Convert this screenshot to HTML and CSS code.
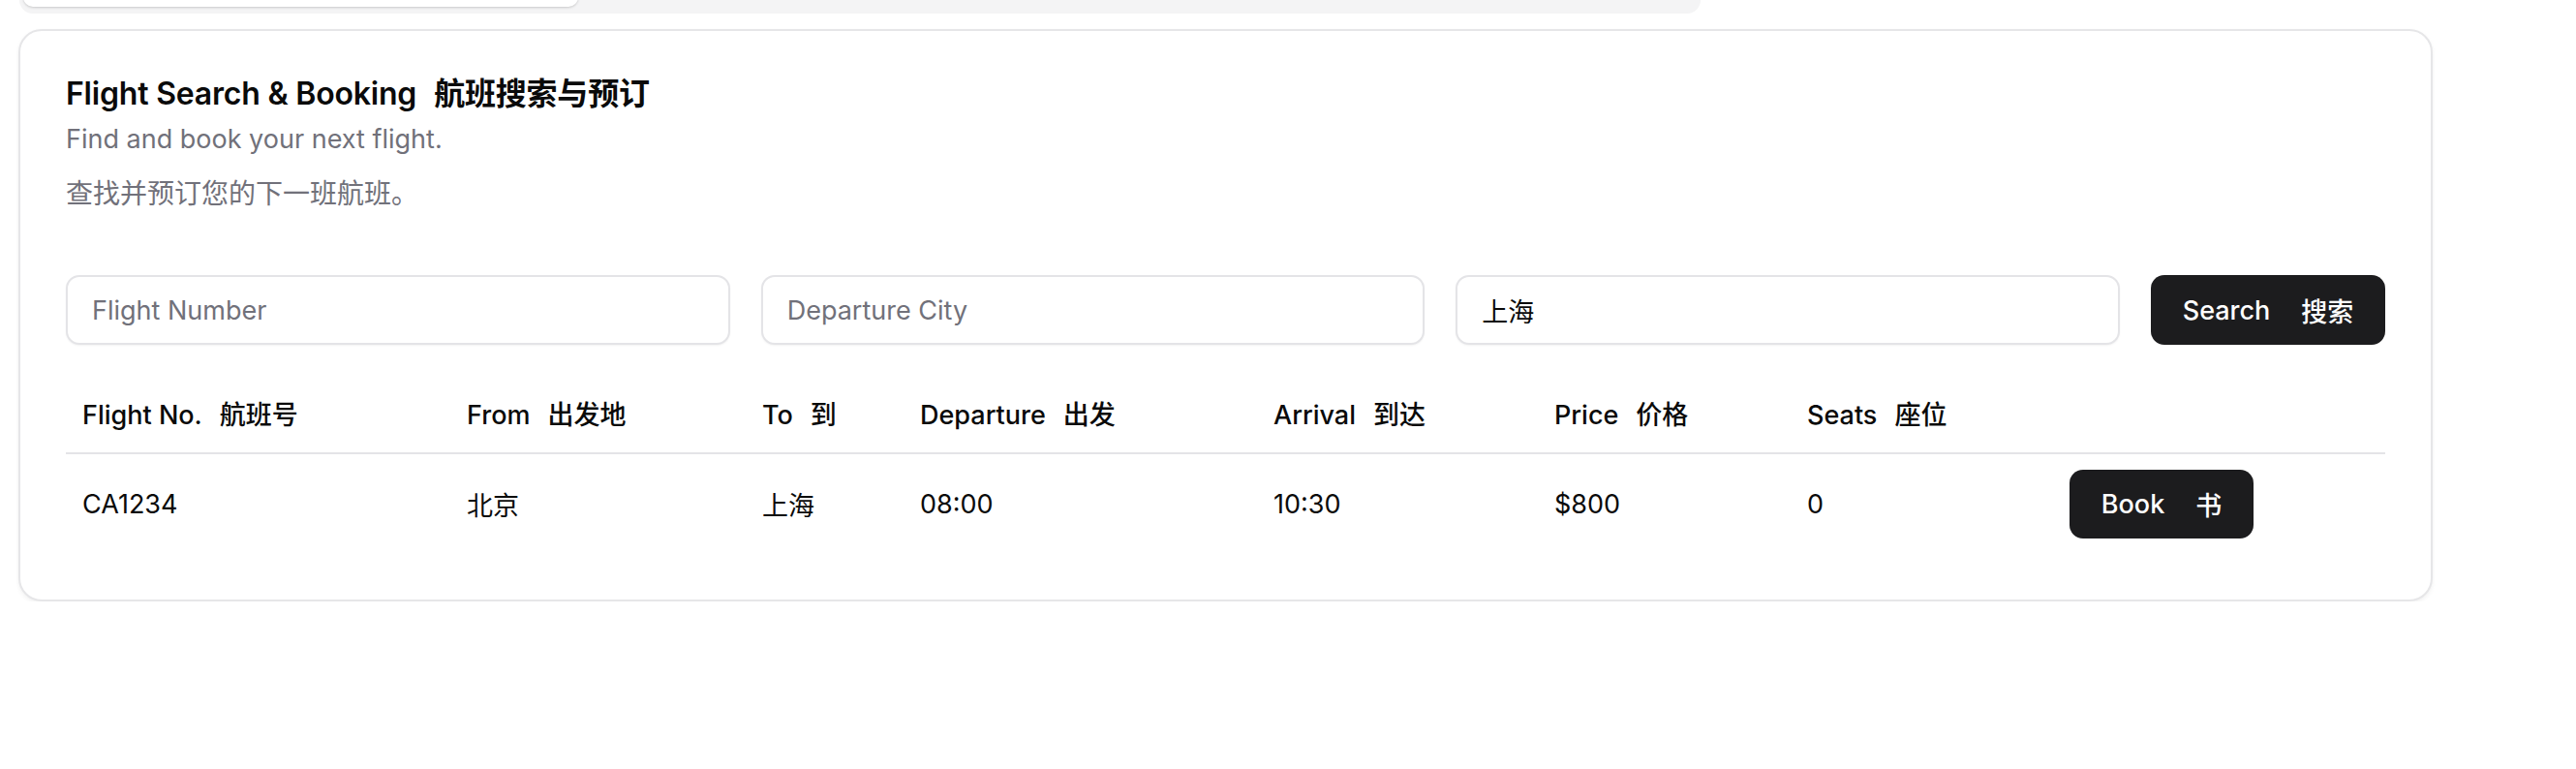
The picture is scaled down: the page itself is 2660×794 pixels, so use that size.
FILE: index.html
```html
<!DOCTYPE html>
<html lang="zh-CN">
<head>
<meta charset="utf-8">
<title>Flight Search &amp; Booking</title>
<link rel="stylesheet" href="styles.css">
</head>
<body>
<div class="page">
  <div class="tabs-list">
    <div class="tab tab-active"></div>
    <div class="tab"></div>
    <div class="tab"></div>
  </div>

  <section class="card">
    <header class="card-header">
      <h2 class="card-title"><span>Flight Search &amp; Booking</span><span class="zh">航班搜索与预订</span></h2>
      <p class="card-desc">Find and book your next flight.</p>
      <p class="card-desc card-desc-zh">查找并预订您的下一班航班。</p>
    </header>

    <div class="search-row">
      <input class="field" type="text" placeholder="Flight Number">
      <input class="field" type="text" placeholder="Departure City">
      <input class="field" type="text" value="上海">
      <button class="btn btn-search"><span>Search</span><span>搜索</span></button>
    </div>

    <table class="flights">
      <colgroup>
        <col class="c1"><col class="c2"><col class="c3"><col class="c4">
        <col class="c5"><col class="c6"><col class="c7"><col class="c8">
      </colgroup>
      <thead>
        <tr>
          <th>Flight No.<span class="zh">航班号</span></th>
          <th>From<span class="zh">出发地</span></th>
          <th>To<span class="zh">到</span></th>
          <th>Departure<span class="zh">出发</span></th>
          <th>Arrival<span class="zh">到达</span></th>
          <th>Price<span class="zh">价格</span></th>
          <th>Seats<span class="zh">座位</span></th>
          <th></th>
        </tr>
      </thead>
      <tbody>
        <tr>
          <td>CA1234</td>
          <td>北京</td>
          <td>上海</td>
          <td>08:00</td>
          <td>10:30</td>
          <td>$800</td>
          <td>0</td>
          <td><button class="btn btn-book"><span>Book</span><span>书</span></button></td>
        </tr>
      </tbody>
    </table>
  </section>
</div>
</body>
</html>
```

FILE: styles.css
```css
* { box-sizing: border-box; }

html, body {
  margin: 0;
  padding: 0;
  background: #ffffff;
}

body {
  font-family: Inter, "Noto Sans CJK SC", "Noto Sans", sans-serif;
  color: #0a0a0a;
  overflow: hidden;
}

.page {
  padding-left: 19px;
  display: flex;
  flex-direction: column;
  align-items: flex-start;
}

.tabs-list {
  margin-top: -50px;
  margin-left: 1px;
  width: 1736px;
  height: 64px;
  background: #f4f4f5;
  border-radius: 14px;
  padding: 4px 4px 7px 4px;
  display: flex;
}

.tab {
  width: 573px;
  border-radius: 10px;
}

.tab-active {
  background: #ffffff;
  box-shadow: 0 1px 3px rgba(0, 0, 0, 0.12), 0 1px 2px rgba(0, 0, 0, 0.06);
}

.card {
  margin-top: 16px;
  width: 2493px;
  border: 2px solid #e6e6e8;
  border-radius: 24px;
  background: #ffffff;
  box-shadow: 0 2px 4px rgba(0, 0, 0, 0.06);
  padding: 47px;
}

.card-header {
  display: flex;
  flex-direction: column;
}

.card-title {
  margin: 0;
  font-size: 32px;
  line-height: 36px;
  font-weight: 600;
  letter-spacing: -0.2px;
  color: #0a0a0a;
}

.card-title .zh {
  margin-left: 18px;
}

.card-desc {
  margin: 10px 0 0 0;
  font-size: 27px;
  line-height: 38px;
  color: #71717a;
}

.card-desc-zh {
  margin-top: 18px;
  font-size: 28px;
}

.search-row {
  margin-top: 65px;
  display: flex;
  gap: 32px;
  align-items: center;
}

.field {
  flex: 1 1 0;
  min-width: 0;
  height: 72px;
  border: 2px solid #e4e4e7;
  border-radius: 14px;
  padding: 0 25px;
  font-family: Inter, "Noto Sans CJK SC", sans-serif;
  font-size: 27px;
  color: #0a0a0a;
  background: #ffffff;
  box-shadow: 0 1px 2px rgba(0, 0, 0, 0.05);
  outline: none;
}

.field::placeholder {
  color: #71717a;
}

.btn {
  display: inline-flex;
  align-items: center;
  justify-content: center;
  gap: 32px;
  border: none;
  border-radius: 14px;
  background: #1c1c1e;
  color: #ffffff;
  font-family: Inter, "Noto Sans CJK SC", sans-serif;
  font-size: 27px;
  font-weight: 500;
  padding: 0 33px;
  cursor: pointer;
  white-space: nowrap;
}

.btn-search {
  flex: 0 0 auto;
  width: 242px;
  height: 72px;
}

.btn-book {
  width: 190px;
  height: 71px;
}

.flights {
  margin-top: 30px;
  width: 100%;
  border-collapse: collapse;
  table-layout: fixed;
  font-size: 27px;
}

.c1 { width: 397px; }
.c2 { width: 305px; }
.c3 { width: 163px; }
.c4 { width: 365px; }
.c5 { width: 290px; }
.c6 { width: 261px; }
.c7 { width: 271px; }
.c8 { width: auto; }

.flights th {
  height: 82px;
  text-align: left;
  font-weight: 500;
  color: #0a0a0a;
  padding: 0 17px;
  border-bottom: 2px solid #e4e4e7;
  vertical-align: middle;
  white-space: nowrap;
}

.flights th .zh {
  margin-left: 18px;
}

.flights td {
  height: 104px;
  padding: 0 17px;
  font-weight: 400;
  color: #0a0a0a;
  vertical-align: middle;
  white-space: nowrap;
}
```
